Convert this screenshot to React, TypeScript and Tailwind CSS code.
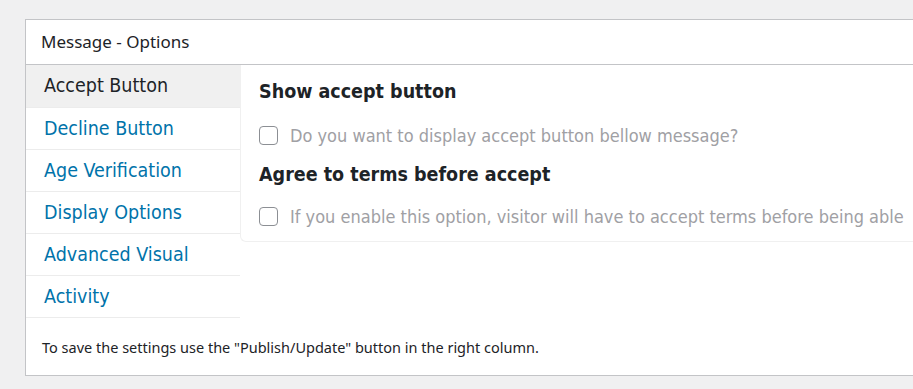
const tabs = [
  "Accept Button",
  "Decline Button",
  "Age Verification",
  "Display Options",
  "Advanced Visual",
  "Activity",
];

const options = [
  {
    title: "Show accept button",
    label: "Do you want to display accept button bellow message?",
  },
  {
    title: "Agree to terms before accept",
    label: "If you enable this option, visitor will have to accept terms before being able",
  },
];

const App = () => {
  return (
    <div className="min-h-[389px] w-[913px] overflow-hidden bg-[#f0f0f1] pl-[25px] pt-[19px]">
      <div className="w-[920px] border border-[#c3c4c7] bg-white">
        <div className="flex h-[45px] items-center border-b border-[#c3c4c7] pl-[15px] font-['Noto_Sans',sans-serif] text-[17px] text-[#1d2327]">
          Message - Options
        </div>

        <div className="flex items-start font-['DejaVu_Sans_Condensed','DejaVu_Sans',sans-serif]">
          <ul className="w-[214px] shrink-0">
            {tabs.map((tab, i) => (
              <li
                key={tab}
                className={
                  i === 0
                    ? "relative z-10 mr-[-1px] flex h-[42px] items-center bg-[#f0f0f0] pl-[18px] text-[19.5px] text-[#1d2327]"
                    : "flex h-[42px] items-center border-t border-[#ececec] pl-[18px] text-[19.5px] text-[#0073aa]"
                }
              >
                {tab}
              </li>
            ))}
            <li className="h-0 border-t border-[#ececec]" />
          </ul>

          <div className="flex-1 rounded-bl-[6px] border-b border-l border-[#f0f0f0] pb-[15px] pl-[18px] pt-[15px]">
            {options.map((opt, i) => (
              <div key={opt.title} className={i === 0 ? "" : "mt-[18px]"}>
                <h3 className="text-[19.5px] font-bold leading-[24px] text-[#1d2327]">
                  {opt.title}
                </h3>
                <label
                  className={`${i === 0 ? "mt-[22px]" : "mt-[20px]"} flex items-center gap-[12px] whitespace-nowrap text-[18px] leading-[19px] text-[#a0a0a4]`}
                >
                  <span className="h-[19px] w-[19px] shrink-0 rounded-[4px] border border-[#8c8f94] bg-white" />
                  {opt.label}
                </label>
              </div>
            ))}
          </div>
        </div>

        <p className="pb-[16px] pl-[16px] pt-[19px] font-['Noto_Sans',sans-serif] text-[14.5px] text-[#1d2327]">
          To save the settings use the "Publish/Update" button in the right column.
        </p>
      </div>
    </div>
  );
};

export default App;
